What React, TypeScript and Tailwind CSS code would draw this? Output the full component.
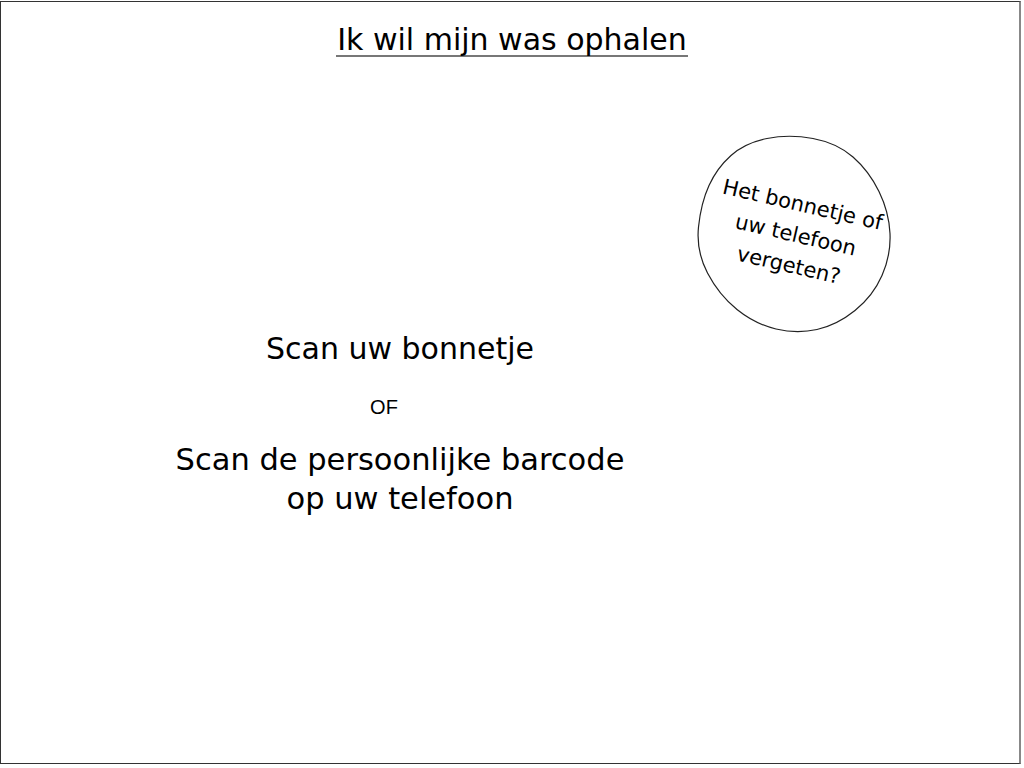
import React from "react";

const pts: [number, number][] = [
  [90, -1],
  [138, 8],
  [170, 36],
  [190, 77],
  [192, 120],
  [174, 161],
  [138, 190],
  [98, 199],
  [56, 189],
  [20, 160],
  [-3, 116],
  [2, 68],
  [18, 33],
  [46, 8],
];

const blobPath = () => {
  const mid = (a: [number, number], b: [number, number]) => [
    (a[0] + b[0]) / 2,
    (a[1] + b[1]) / 2,
  ];
  const n = pts.length;
  const start = mid(pts[n - 1], pts[0]);
  let d = `M${start[0]} ${start[1]}`;
  for (let i = 0; i < n; i++) {
    const m = mid(pts[i], pts[(i + 1) % n]);
    d += ` Q${pts[i][0]} ${pts[i][1]} ${m[0]} ${m[1]}`;
  }
  return d + " Z";
};

const Bubble = () => (
  <div className="relative w-[194px] h-[200px] shrink-0">
    <svg
      className="absolute inset-0 overflow-visible"
      width="194"
      height="200"
      viewBox="0 0 194 200"
    >
      <path d={blobPath()} fill="white" stroke="#222" strokeWidth="1.2" />
    </svg>
    <div className="relative flex h-full items-center justify-center">
      <p className="rotate-[13deg] whitespace-nowrap text-center text-[21px] leading-[31px] text-black">
        Het bonnetje of
        <br />
        uw telefoon
        <br />
        vergeten?
      </p>
    </div>
  </div>
);

export default function App() {
  return (
    <div
      className="w-[1024px] h-[768px] bg-white pt-[1px]"
      style={{ fontFamily: '"DejaVu Sans", sans-serif' }}
    >
      <div className="w-[1021px] h-[763px] border border-[#333] border-r-2 border-r-[#888] bg-white">
        <div className="flex justify-center pt-[22px]">
          <h1 className="ml-[4px] border-b-2 border-[#777] px-[1px] text-[30px] leading-[31px] text-black">
            Ik wil mijn was ophalen
          </h1>
        </div>

        <div className="mt-[78px] flex items-start">
          <div className="ml-[100px] w-[598px] pt-[194px] text-center text-black">
            <p className="text-[30px] leading-[40px]">Scan uw bonnetje</p>
            <p
              className="mt-[26px] pr-[32px] text-[20px] leading-[24px]"
              style={{ fontFamily: '"Liberation Sans", sans-serif' }}
            >
              OF
            </p>
            <p className="mt-[21px] text-[30.5px] leading-[39px]">
              Scan de persoonlijke barcode
              <br />
              op uw telefoon
            </p>
          </div>
          <Bubble />
        </div>
      </div>
    </div>
  );
}
